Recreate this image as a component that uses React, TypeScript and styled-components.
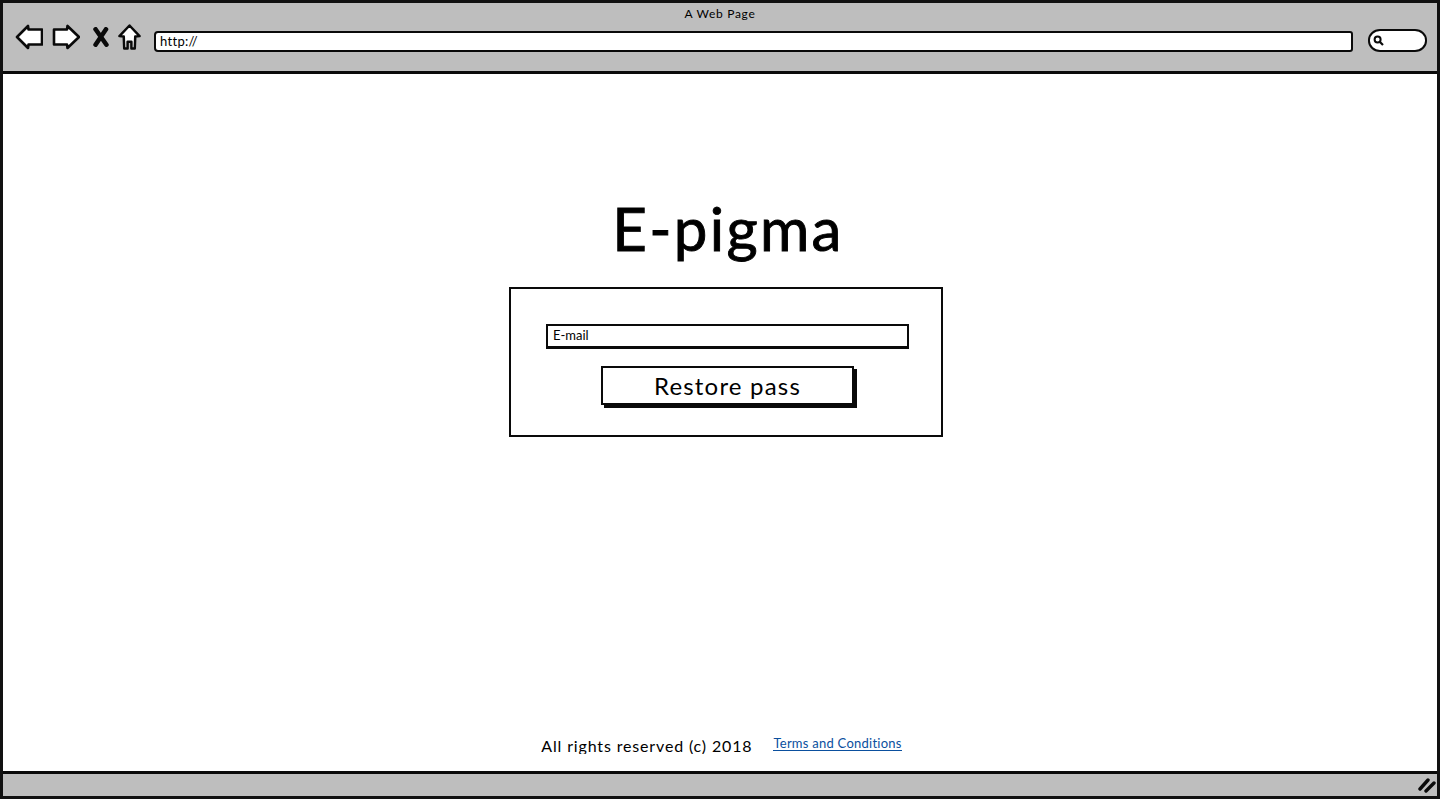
import styled, { createGlobalStyle } from 'styled-components';

const GlobalStyle = createGlobalStyle`
  html, body {
    margin: 0;
    padding: 0;
    background: #ffffff;
  }

  body {
    font-family: 'Lato', 'Open Sans', sans-serif;
    color: #000000;
  }
`;

const Frame = styled.div`
  box-sizing: border-box;
  width: 1440px;
  height: 799px;
  display: flex;
  flex-direction: column;
  border: 3px solid #111111;
  overflow: hidden;
`;

const BrowserBar = styled.header`
  box-sizing: border-box;
  height: 71px;
  flex: none;
  display: flex;
  flex-direction: column;
  background: #bebebe;
  border-bottom: 3px solid #0a0a0a;
`;

const PageTitle = styled.div`
  height: 19px;
  padding-top: 2px;
  box-sizing: border-box;
  text-align: center;
  font-size: 12px;
  line-height: 17px;
  letter-spacing: 0.7px;
`;

const Toolbar = styled.div`
  display: flex;
  align-items: center;
  height: 30px;
  padding: 0 10px 0 12px;
`;

const NavIcon = styled.svg<{ $gap: number }>`
  display: block;
  flex: none;
  margin-right: ${(p) => p.$gap}px;
`;

const UrlField = styled.div`
  box-sizing: border-box;
  flex: 1;
  height: 21px;
  margin-top: 8px;
  padding-left: 4px;
  background: #ffffff;
  border: 2px solid #0a0a0a;
  border-radius: 4px 3px 3px 4px;
  font-size: 13px;
  line-height: 16px;
  letter-spacing: 0.3px;
`;

const SearchField = styled.div`
  box-sizing: border-box;
  flex: none;
  width: 59px;
  height: 23px;
  margin: 7px 0 0 15px;
  padding-left: 3px;
  display: flex;
  align-items: center;
  background: #ffffff;
  border: 2px solid #0a0a0a;
  border-radius: 12px / 11px;
`;

const Main = styled.main`
  flex: 1;
  min-height: 0;
  display: flex;
  flex-direction: column;
  align-items: center;
  padding-left: 12px;
  background: #ffffff;
`;

const Title = styled.h1`
  margin: 118px 0 0 4px;
  height: 95px;
  font-size: 60px;
  font-weight: 400;
  line-height: 72px;
  letter-spacing: 2.3px;
  -webkit-text-stroke: 0.9px #000000;
`;

const Card = styled.section`
  box-sizing: border-box;
  width: 434px;
  height: 150px;
  padding: 35px 32px 0 35px;
  display: flex;
  flex-direction: column;
  align-items: center;
  border: 2px solid #0a0a0a;
`;

const EmailInput = styled.div`
  box-sizing: border-box;
  width: 100%;
  height: 25px;
  padding-left: 5px;
  border: 2px solid #0a0a0a;
  border-bottom-width: 3px;
  font-size: 13px;
  line-height: 19px;
`;

const RestoreButton = styled.button`
  box-sizing: border-box;
  width: 253px;
  height: 39px;
  margin: 17px 0 0 0;
  padding: 0;
  background: #ffffff;
  border: 2px solid #0a0a0a;
  box-shadow: 3px 3px 0 #0a0a0a;
  font-family: inherit;
  font-size: 24px;
  line-height: 34px;
  letter-spacing: 1.2px;
  color: #000000;
`;

const Credits = styled.div`
  margin-top: auto;
  margin-bottom: 17px;
  margin-right: 9px;
  display: flex;
  align-items: flex-start;
  gap: 21px;
`;

const Copyright = styled.div`
  height: 18px;
  overflow: hidden;
  font-size: 16px;
  line-height: 20px;
  letter-spacing: 0.85px;
`;

const TermsLink = styled.a`
  display: block;
  margin-top: -1px;
  height: 15px;
  border-bottom: 1px solid #0a4f9e;
  color: #0a4f9e;
  font-size: 13px;
  line-height: 17px;
  letter-spacing: 0.25px;
  text-decoration: none;
`;

const StatusBar = styled.footer`
  box-sizing: border-box;
  height: 25px;
  flex: none;
  display: flex;
  justify-content: flex-end;
  align-items: center;
  padding-right: 1px;
  background: #bebebe;
  border-top: 3px solid #0a0a0a;
`;

const App = () => {
  return (
    <>
      <GlobalStyle />
      <Frame>
        <BrowserBar>
          <PageTitle>A Web Page</PageTitle>
          <Toolbar>
            <NavIcon $gap={9} width="28" height="26" viewBox="0 0 28 26">
              <path d="M2 13 L13 2 L13.5 5.5 L27 5.5 L27 20.5 L13.5 20.5 L13 24 Z" fill="#fff" stroke="#0a0a0a" strokeWidth="2.6" strokeLinejoin="round" />
            </NavIcon>
            <NavIcon $gap={12} width="28" height="26" viewBox="0 0 28 26">
              <path d="M27 13 L15.5 2 L15 5.5 L2 5.5 L2 20.5 L15 20.5 L15.5 24 Z" fill="#fff" stroke="#0a0a0a" strokeWidth="2.6" strokeLinejoin="round" />
            </NavIcon>
            <NavIcon $gap={8} width="18" height="20" viewBox="0 0 18 22">
              <path d="M3 2.5 L15 19.5 M14.5 2.5 L3 19.5" fill="none" stroke="#0a0a0a" strokeWidth="5" strokeLinecap="round" />
            </NavIcon>
            <NavIcon $gap={13} width="23" height="28" viewBox="0 0 24 28">
              <path d="M12 2 L22.5 13 L18 13.5 L17.5 26 L14 26 L14 19 L10 19 L10 26 L6.5 26 L6 13.5 L1.5 13 Z" fill="#fff" stroke="#0a0a0a" strokeWidth="2.6" strokeLinejoin="round" />
            </NavIcon>
            <UrlField>http://</UrlField>
            <SearchField>
              <svg width="11" height="11" viewBox="0 0 11 11">
                <circle cx="4.6" cy="4.6" r="3" fill="none" stroke="#0a0a0a" strokeWidth="2" />
                <path d="M7 7 L10 10" stroke="#0a0a0a" strokeWidth="2.2" />
              </svg>
            </SearchField>
          </Toolbar>
        </BrowserBar>
        <Main>
          <Title>E-pigma</Title>
          <Card>
            <EmailInput>E-mail</EmailInput>
            <RestoreButton>Restore pass</RestoreButton>
          </Card>
          <Credits>
            <Copyright>All rights reserved (c) 2018</Copyright>
            <TermsLink href="#">Terms and Conditions</TermsLink>
          </Credits>
        </Main>
        <StatusBar>
          <svg width="18" height="16" viewBox="0 0 18 16">
            <path d="M2 12 L10 3 M8 14 L16 6" fill="none" stroke="#0a0a0a" strokeWidth="3.4" strokeLinecap="round" />
          </svg>
        </StatusBar>
      </Frame>
    </>
  );
};

export default App;
